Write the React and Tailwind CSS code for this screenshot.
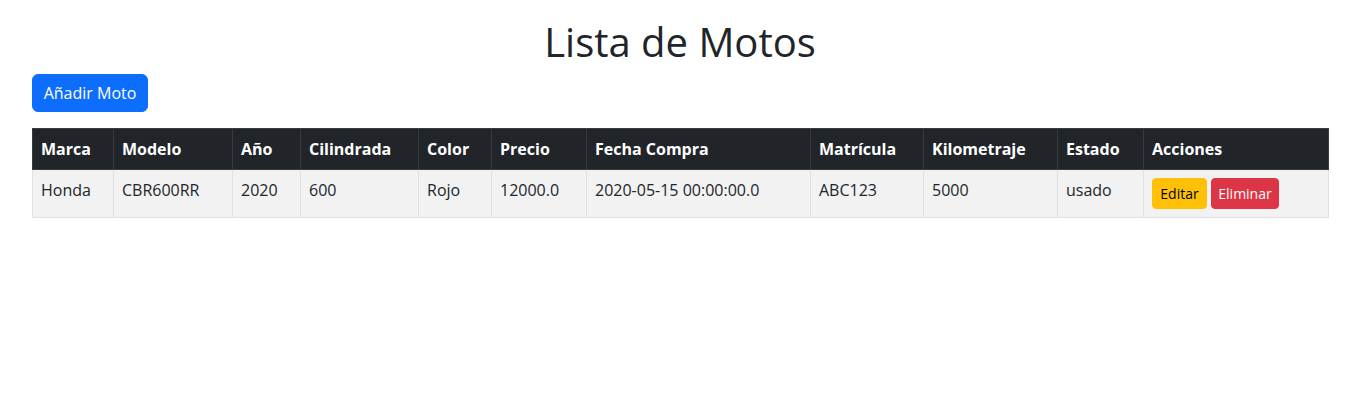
export default function App() {
  const cols = [
    ["Marca", "Honda", "w-[81px]"],
    ["Modelo", "CBR600RR", "w-[119px]"],
    ["Año", "2020", "w-[68px]"],
    ["Cilindrada", "600", "w-[118px]"],
    ["Color", "Rojo", "w-[73px]"],
    ["Precio", "12000.0", "w-[95px]"],
    ["Fecha Compra", "2020-05-15 00:00:00.0", "w-[224px]"],
    ["Matrícula", "ABC123", "w-[113px]"],
    ["Kilometraje", "5000", "w-[134px]"],
    ["Estado", "usado", "w-[86px]"],
  ];
  return (
    <div className="min-h-[401px] bg-white text-[#212529] font-['Open_Sans',sans-serif] text-[16px] leading-6">
      <div className="ml-[32px] w-[1296px] pt-[18px]">
        <h1 className="text-center text-[40px] leading-[48px] font-normal mb-2">Lista de Motos</h1>
        <button className="block bg-[#0d6efd] text-white border border-[#0d6efd] rounded-[6px] py-[6px] leading-6 text-[16px] mb-4 w-[116px] whitespace-nowrap text-center">
          Añadir Moto
        </button>
        <table className="w-[1296px] table-fixed border-collapse border border-[#dee2e6]">
          <colgroup>
            {cols.map((c) => (
              <col key={c[0]} className={c[2]} />
            ))}
            <col className="w-[185px]" />
          </colgroup>
          <thead>
            <tr className="bg-[#212529] text-white">
              {cols.map((c) => (
                <th key={c[0]} className="text-left font-bold p-2 border border-[#373b3e] whitespace-nowrap">
                  {c[0]}
                </th>
              ))}
              <th className="text-left font-bold p-2 border border-[#373b3e]">Acciones</th>
            </tr>
          </thead>
          <tbody>
            <tr className="bg-[#f2f2f2]">
              {cols.map((c) => (
                <td key={c[0]} className="p-2 border border-[#dee2e6] align-top whitespace-nowrap">
                  {c[1]}
                </td>
              ))}
              <td className="p-2 border border-[#dee2e6] align-top whitespace-nowrap">
                <div className="flex gap-1">
                  <button className="bg-[#ffc107] text-black rounded-[4px] py-1 text-[14px] leading-[21px] border border-[#ffc107] w-[55px] text-center">
                    Editar
                  </button>
                  <button className="bg-[#dc3545] text-white rounded-[4px] py-1 text-[14px] leading-[21px] border border-[#dc3545] w-[68px] text-center">
                    Eliminar
                  </button>
                </div>
              </td>
            </tr>
          </tbody>
        </table>
      </div>
    </div>
  );
}
